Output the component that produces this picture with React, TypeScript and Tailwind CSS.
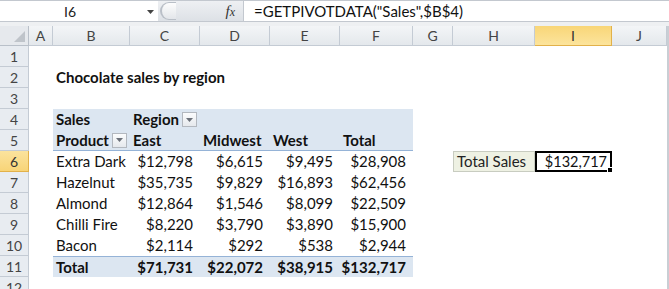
import React from 'react';

const font = { fontFamily: 'Lato, "Liberation Sans", sans-serif' };

const COLS = [
  { key: 'A', w: 24 },
  { key: 'B', w: 77 },
  { key: 'C', w: 70 },
  { key: 'D', w: 70 },
  { key: 'E', w: 70 },
  { key: 'F', w: 73 },
  { key: 'G', w: 40 },
  { key: 'H', w: 82 },
  { key: 'I', w: 77 },
  { key: 'J', w: 55 },
];

const data = [
  ['Extra Dark', '$12,798', '$6,615', '$9,495', '$28,908'],
  ['Hazelnut', '$35,735', '$9,829', '$16,893', '$62,456'],
  ['Almond', '$12,864', '$1,546', '$8,099', '$22,509'],
  ['Chilli Fire', '$8,220', '$3,790', '$3,890', '$15,900'],
  ['Bacon', '$2,114', '$292', '$538', '$2,944'],
];

const FilterButton: React.FC = () => (
  <span className="ml-[3px] inline-flex h-[15px] w-[15px] items-center justify-center border border-[#b3b8bf] bg-gradient-to-b from-[#fbfcfd] to-[#e6e9ed]">
    <svg width="7" height="4" viewBox="0 0 7 4">
      <path d="M0 0h7L3.5 4z" fill="#6b7079" />
    </svg>
  </span>
);

const RowHeader: React.FC<{ n: number; active?: boolean }> = ({ n, active }) => (
  <div
    className={
      'flex w-[29px] shrink-0 items-center justify-center border-b border-r text-[14px] ' +
      (active
        ? 'border-[#e2b14a] bg-gradient-to-b from-[#fbe39d] to-[#f8d477] text-[#333]'
        : 'border-[#c4cbd4] bg-[#e8ecf1] text-[#444]')
    }
  >
    {n}
  </div>
);

type CellDef = { text?: React.ReactNode; bold?: boolean; right?: boolean; cls?: string };

const Row: React.FC<{ n: number; cells: Record<string, CellDef>; band?: 'head' | 'headLine' | 'total' }> = ({
  n,
  cells,
  band,
}) => (
  <div className="flex h-[21px]">
    <RowHeader n={n} active={n === 6} />
    {COLS.map((c) => {
      const def = cells[c.key] || {};
      const inPivot = ['B', 'C', 'D', 'E', 'F'].includes(c.key);
      let bandCls = '';
      if (band && inPivot) {
        if (band === 'head') bandCls = 'bg-[#dce6f1]';
        if (band === 'headLine') bandCls = 'bg-[#dce6f1] border-b border-[#95b3d7]';
        if (band === 'total') bandCls = 'bg-[#dce6f1] border-t border-[#95b3d7]';
      }
      return (
        <div
          key={c.key}
          style={{ width: c.w }}
          className={
            'relative flex shrink-0 items-center whitespace-nowrap text-[15px] text-[#111] ' +
            (def.right ? 'justify-end pr-[7px] ' : 'pl-[3px] ') +
            (def.bold ? 'font-bold ' : '') +
            bandCls +
            ' ' +
            (def.cls || '')
          }
        >
          {def.text}
        </div>
      );
    })}
  </div>
);

export default function App() {
  return (
    <div className="relative h-[289px] w-[669px] overflow-hidden bg-white" style={font}>
      {/* formula bar */}
      <div className="flex h-[22px] border-t border-b border-[#c3c8cf] bg-[#dfe3e8]">
        <div className="relative flex w-[158px] items-center bg-white">
          <span className="w-[140px] text-center text-[14px] text-[#222]">I6</span>
          <svg className="absolute left-[147px] top-[9px]" width="7" height="4" viewBox="0 0 7 4">
            <path d="M0 0h7L3.5 4z" fill="#444" />
          </svg>
        </div>
        <div className="flex w-[85px] items-center bg-gradient-to-b from-[#eef0f3] to-[#dde1e6]">
          <div className="ml-[2px] h-[18px] w-[16px] rounded-l-full border-l-2 border-t border-b border-[#b9bfc7] bg-gradient-to-b from-[#fdfdfd] to-[#e3e6ea]" />
          <span
            className="ml-auto mr-[8px] text-[15px] italic text-[#333]"
            style={{ fontFamily: '"Liberation Serif", serif' }}
          >
            f<span className="text-[12px]">x</span>
          </span>
        </div>
        <div className="flex flex-1 items-center border-l border-[#c3c8cf] bg-white pl-[10px] text-[15px] text-[#111]">
          =GETPIVOTDATA("Sales",$B$4)
        </div>
      </div>
      <div className="h-[4px] bg-[#eef0f2]" />
      {/* column headers */}
      <div className="flex h-[20px]">
        <div className="relative w-[29px] shrink-0 border-b border-r border-[#b9c0c9] bg-[#e6e9ed]">
          <svg className="absolute bottom-[3px] right-[3px]" width="11" height="11" viewBox="0 0 11 11">
            <path d="M11 0v11H0z" fill="#bfc4ca" />
          </svg>
        </div>
        {COLS.map((c) => (
          <div
            key={c.key}
            style={{ width: c.w }}
            className={
              'flex shrink-0 items-center justify-center border-b border-r text-[14px] ' +
              (c.key === 'I'
                ? 'border-[#e2b14a] bg-gradient-to-b from-[#f9d677] to-[#fce49c] text-[#333]'
                : 'border-[#c4cbd4] bg-gradient-to-b from-[#f3f5f7] to-[#e4e8ec] text-[#444]')
            }
          >
            {c.key}
          </div>
        ))}
      </div>
      {/* grid */}
      <Row n={1} cells={{}} />
      <Row n={2} cells={{ B: { text: 'Chocolate sales by region', bold: true } }} />
      <Row n={3} cells={{}} />
      <Row
        n={4}
        band="head"
        cells={{
          B: { text: 'Sales', bold: true },
          C: {
            text: (
              <>
                Region
                <FilterButton />
              </>
            ),
            bold: true,
          },
        }}
      />
      <Row
        n={5}
        band="headLine"
        cells={{
          B: {
            text: (
              <>
                Product
                <FilterButton />
              </>
            ),
            bold: true,
          },
          C: { text: 'East', bold: true },
          D: { text: 'Midwest', bold: true },
          E: { text: 'West', bold: true },
          F: { text: 'Total', bold: true },
        }}
      />
      {data.map((r, i) => {
        const n = 6 + i;
        const cells: Record<string, CellDef> = {
          B: { text: r[0] },
          C: { text: r[1], right: true },
          D: { text: r[2], right: true },
          E: { text: r[3], right: true },
          F: { text: r[4], right: true },
        };
        if (n === 6) {
          cells.H = {
            text: 'Total Sales',
            cls: 'border border-[#c8ccc0] bg-[#eef1e3] text-[#222] pl-[2px]',
          };
          cells.I = {
            text: (
              <>
                <span className="text-[14.5px]">$132,717</span>
                <span className="absolute -bottom-[3px] -right-[3px] h-[6px] w-[6px] border border-white bg-black" />
              </>
            ),
            right: true,
            cls: 'border-2 border-black !pr-[3px]',
          };
        }
        return <Row key={n} n={n} cells={cells} />;
      })}
      <Row
        n={11}
        band="total"
        cells={{
          B: { text: 'Total', bold: true },
          C: { text: '$71,731', bold: true, right: true },
          D: { text: '$22,072', bold: true, right: true },
          E: { text: '$38,915', bold: true, right: true },
          F: { text: '$132,717', bold: true, right: true },
        }}
      />
      <Row n={12} cells={{}} />
      {/* right edge */}
      <div className="absolute right-0 top-[26px] h-[263px] w-[2px] bg-[#c9ced4]" />
    </div>
  );
}
